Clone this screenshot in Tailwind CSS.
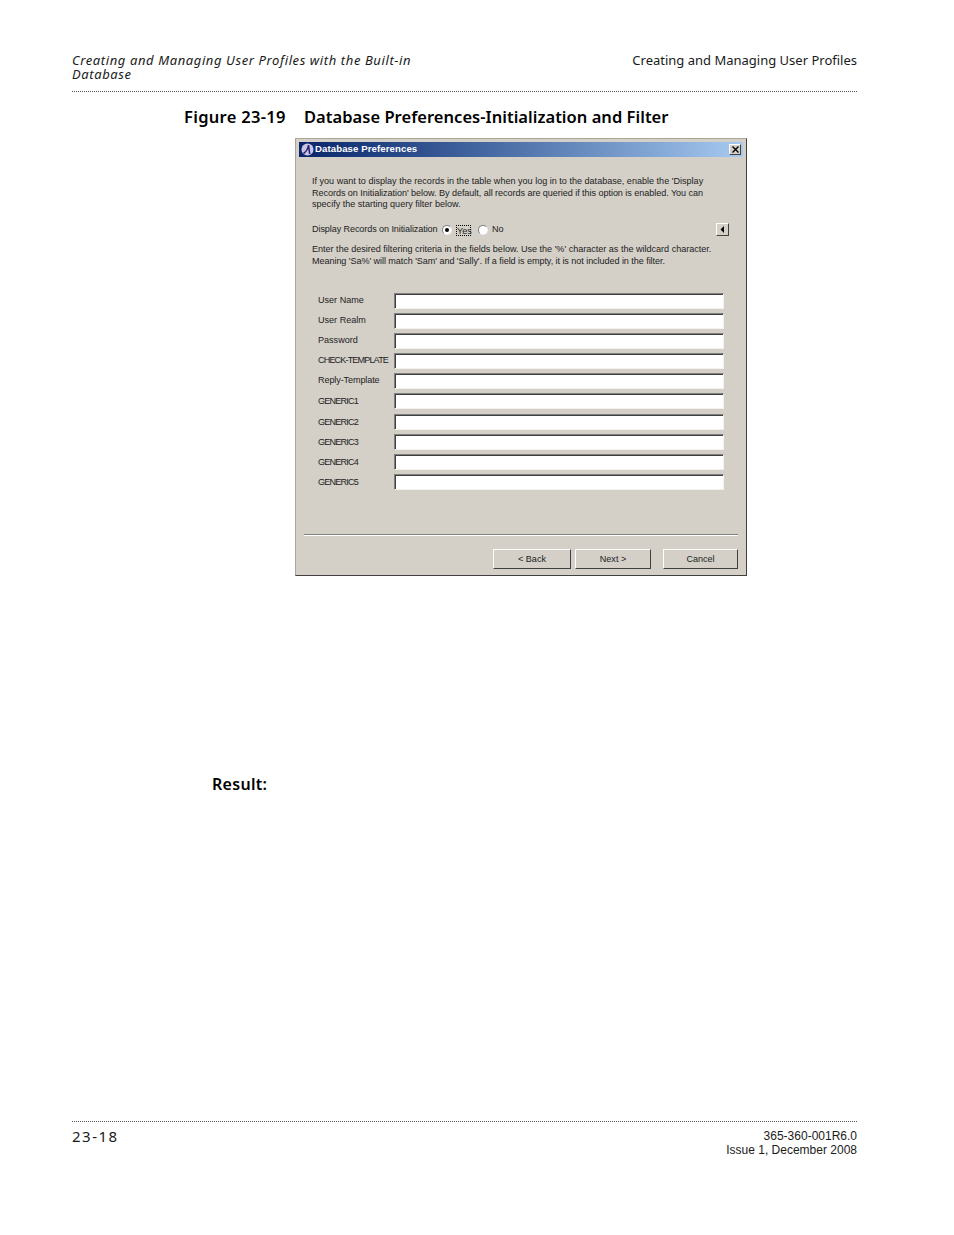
<!DOCTYPE html>
<html>
<head>
<meta charset="utf-8">
<script src="https://cdn.jsdelivr.net/npm/@tailwindcss/browser@4"></script>
</head>
<body class="bg-white">
<div class="w-[954px] h-[1235px] flex flex-col pl-[72px] pr-[97px] font-['Noto_Sans','DejaVu_Sans',sans-serif] text-[#1a1a1a] overflow-hidden">
  <header class="pt-[53px] h-[92px] border-b border-dotted border-[#555] flex justify-between items-start text-[13px] leading-[14px] shrink-0">
    <div class="w-[350px] italic tracking-[0.6px]">Creating and Managing User Profiles with the Built-in Database</div>
    <div>Creating and Managing User Profiles</div>
  </header>
  <h2 class="ml-[112px] mt-[14px] text-[16.5px] leading-[22px] font-semibold text-black flex whitespace-nowrap">
    <span class="w-[120px] tracking-[0.3px]">Figure 23-19</span>
    <span class="tracking-[0.03px]">Database Preferences-Initialization and Filter</span>
  </h2>

  <section class="ml-[223px] mt-[10px] w-[452px] h-[438px] shrink-0 bg-[#d4d0c8] border border-[#aaa69e] border-r-[#404040] border-b-[#404040] p-[3px] flex flex-col font-['Liberation_Sans',sans-serif] text-[9.07px] text-[#222]">
    <div class="h-[15px] bg-gradient-to-r from-[#0a246a] to-[#a6caf0] flex items-center pl-[2px] pr-[2px] shrink-0">
      <svg class="w-[13px] h-[13px] shrink-0" viewBox="0 0 13 13"><circle cx="6.5" cy="6.5" r="6" fill="#c9c6e4"/><path d="M2.5 10.5 C5.5 8.5 7 5.5 7.5 2 L8.7 11" fill="none" stroke="#2a1f70" stroke-width="1.6"/></svg>
      <span class="ml-[1px] text-white font-bold text-[9.6px] tracking-[0.1px]">Database Preferences</span>
      <div class="ml-auto w-[12px] h-[11px] bg-[#d4d0c8] border border-white border-r-[#404040] border-b-[#404040] flex items-center justify-center">
        <svg class="w-[7px] h-[7px]" viewBox="0 0 7 7"><path d="M0.5 0.5 L6.5 6.5 M6.5 0.5 L0.5 6.5" stroke="#000" stroke-width="1.4"/></svg>
      </div>
    </div>

    <div class="pl-[13px] pt-[19px] leading-[11.7px] whitespace-nowrap">
      <p>If you want to display the records in the table when you log in to the database, enable the 'Display</p>
      <p class="tracking-[-0.05px]">Records on Initialization' below. By default, all records are queried if this option is enabled. You can</p>
      <p>specify the starting query filter below.</p>
    </div>

    <div class="pl-[13px] pr-[14px] mt-[12px] h-[14px] flex items-center">
      <span class="w-[130px] tracking-[-0.09px]">Display Records on Initialization</span>
      <span class="w-[10px] h-[10px] rounded-full bg-white border border-[#808080] border-r-[#eee] border-b-[#eee] flex items-center justify-center"><span class="w-[4px] h-[4px] rounded-full bg-black"></span></span>
      <span class="ml-[4px] w-[15px] h-[11px] leading-[10px] text-center border border-dotted border-black">Yes</span>
      <span class="ml-[7px] w-[10px] h-[10px] rounded-full bg-white border border-[#808080] border-r-[#eee] border-b-[#eee]"></span>
      <span class="ml-[4px]">No</span>
      <div class="ml-auto mb-[2px] w-[13px] h-[13px] bg-[#d4d0c8] border border-white border-r-[#404040] border-b-[#404040] flex items-center justify-center">
        <svg class="w-[5px] h-[7px]" viewBox="0 0 5 7"><path d="M4 0 L4 7 L0.5 3.5 Z" fill="#000"/></svg>
      </div>
    </div>

    <div class="pl-[13px] mt-[7px] leading-[11.7px] whitespace-nowrap">
      <p class="tracking-[-0.01px]">Enter the desired filtering criteria in the fields below. Use the '%' character as the wildcard character.</p>
      <p class="tracking-[-0.06px]">Meaning 'Sa%' will match 'Sam' and 'Sally'. If a field is empty, it is not included in the filter.</p>
    </div>

    <div class="mt-[25px] pl-[19px] flex flex-col whitespace-nowrap">
      <div class="h-[20.2px] flex"><label class="w-[76px] h-[15px] leading-[15px]">User Name</label><div class="w-[330px] h-[16px] bg-white border border-[#808080] border-r-[#f4f2ee] border-b-[#f4f2ee] shadow-[inset_1px_1px_0_#404040]"></div></div>
      <div class="h-[20.2px] flex"><label class="w-[76px] h-[15px] leading-[15px]">User Realm</label><div class="w-[330px] h-[16px] bg-white border border-[#808080] border-r-[#f4f2ee] border-b-[#f4f2ee] shadow-[inset_1px_1px_0_#404040]"></div></div>
      <div class="h-[20.2px] flex"><label class="w-[76px] h-[15px] leading-[15px]">Password</label><div class="w-[330px] h-[16px] bg-white border border-[#808080] border-r-[#f4f2ee] border-b-[#f4f2ee] shadow-[inset_1px_1px_0_#404040]"></div></div>
      <div class="h-[20.2px] flex"><label class="w-[76px] h-[15px] leading-[15px] tracking-[-0.85px]">CHECK-TEMPLATE</label><div class="w-[330px] h-[16px] bg-white border border-[#808080] border-r-[#f4f2ee] border-b-[#f4f2ee] shadow-[inset_1px_1px_0_#404040]"></div></div>
      <div class="h-[20.2px] flex"><label class="w-[76px] h-[15px] leading-[15px] tracking-[-0.1px]">Reply-Template</label><div class="w-[330px] h-[16px] bg-white border border-[#808080] border-r-[#f4f2ee] border-b-[#f4f2ee] shadow-[inset_1px_1px_0_#404040]"></div></div>
      <div class="h-[20.2px] flex"><label class="w-[76px] h-[15px] leading-[16px] tracking-[-0.8px]">GENERIC1</label><div class="w-[330px] h-[16px] bg-white border border-[#808080] border-r-[#f4f2ee] border-b-[#f4f2ee] shadow-[inset_1px_1px_0_#404040]"></div></div>
      <div class="h-[20.2px] flex"><label class="w-[76px] h-[15px] leading-[16px] tracking-[-0.8px]">GENERIC2</label><div class="w-[330px] h-[16px] bg-white border border-[#808080] border-r-[#f4f2ee] border-b-[#f4f2ee] shadow-[inset_1px_1px_0_#404040]"></div></div>
      <div class="h-[20.2px] flex"><label class="w-[76px] h-[15px] leading-[16px] tracking-[-0.8px]">GENERIC3</label><div class="w-[330px] h-[16px] bg-white border border-[#808080] border-r-[#f4f2ee] border-b-[#f4f2ee] shadow-[inset_1px_1px_0_#404040]"></div></div>
      <div class="h-[20.2px] flex"><label class="w-[76px] h-[15px] leading-[16px] tracking-[-0.8px]">GENERIC4</label><div class="w-[330px] h-[16px] bg-white border border-[#808080] border-r-[#f4f2ee] border-b-[#f4f2ee] shadow-[inset_1px_1px_0_#404040]"></div></div>
      <div class="h-[20.2px] flex"><label class="w-[76px] h-[15px] leading-[16px] tracking-[-0.8px]">GENERIC5</label><div class="w-[330px] h-[16px] bg-white border border-[#808080] border-r-[#f4f2ee] border-b-[#f4f2ee] shadow-[inset_1px_1px_0_#404040]"></div></div>
    </div>

    <div class="mt-auto">
      <div class="ml-[5px] mr-[5px] h-[2px] border-t border-[#808080] border-b border-b-white"></div>
      <div class="flex justify-end pr-[5px] pt-[13px] pb-[3px]">
        <button class="w-[78px] h-[20px] pt-[1px] bg-[#d4d0c8] border border-white border-r-[#404040] border-b-[#404040]">&lt; Back</button>
        <button class="ml-[4px] w-[76px] h-[20px] pt-[1px] bg-[#d4d0c8] border border-white border-r-[#404040] border-b-[#404040]">Next &gt;</button>
        <button class="ml-[12px] w-[75px] h-[20px] pt-[1px] bg-[#d4d0c8] border border-white border-r-[#404040] border-b-[#404040]">Cancel</button>
      </div>
    </div>
  </section>

  <p class="ml-[140px] mt-[197px] text-[16px] leading-[22px] font-semibold text-black tracking-[0.3px]">Result:</p>

  <footer class="mt-auto mb-[78px] border-t border-dotted border-[#555] flex justify-between items-start pt-[6px]">
    <span class="text-[15px] leading-[16px] tracking-[1.5px]">23-18</span>
    <div class="text-right text-[12px] leading-[14px] pt-[1px] font-['Liberation_Sans',sans-serif]">
      <p>365-360-001R6.0</p>
      <p>Issue 1, December 2008</p>
    </div>
  </footer>
</div>
</body>
</html>
